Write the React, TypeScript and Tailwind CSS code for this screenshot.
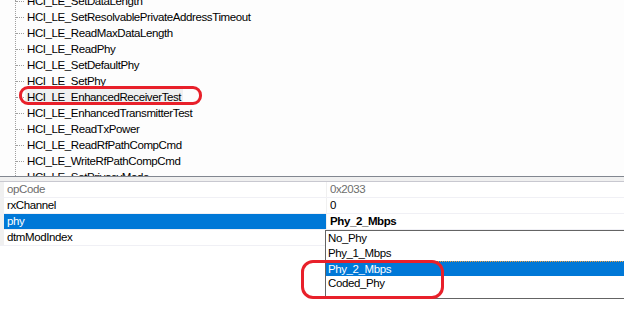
import React from 'react'

const treeItems = [
    'HCI_LE_SetDataLength',
    'HCI_LE_SetResolvablePrivateAddressTimeout',
    'HCI_LE_ReadMaxDataLength',
    'HCI_LE_ReadPhy',
    'HCI_LE_SetDefaultPhy',
    'HCI_LE_SetPhy',
    'HCI_LE_EnhancedReceiverTest',
    'HCI_LE_EnhancedTransmitterTest',
    'HCI_LE_ReadTxPower',
    'HCI_LE_ReadRfPathCompCmd',
    'HCI_LE_WriteRfPathCompCmd',
    'HCI_LE_SetPrivacyMode',
]

const props = [
    { name: 'opCode', value: '0x2033', readOnly: true },
    { name: 'rxChannel', value: '0' },
    { name: 'phy', value: 'Phy_2_Mbps', selected: true },
    { name: 'dtmModIndex', value: '' },
]

const options = ['No_Phy', 'Phy_1_Mbps', 'Phy_2_Mbps', 'Coded_Phy']

export default function App() {
    return (
        <div className="relative w-[624px] h-[310px] overflow-hidden bg-white text-[11.5px] tracking-[-0.4px] text-black font-['Liberation_Sans',Arial,sans-serif]">
            {/* Tree view */}
            <div className="relative h-[176px] overflow-hidden bg-[#fdfdfd]">
                <div className="absolute left-[15px] top-0 bottom-0 border-l border-dotted border-[#a0a0a0]" />
                <ul className="-mt-[7px]">
                    {treeItems.map((item) => (
                        <li key={item} className="flex items-center h-4">
                            <span className="ml-[16px] w-[8px] border-t border-dotted border-[#a0a0a0]" />
                            <span
                                className={
                                    item === 'HCI_LE_EnhancedReceiverTest'
                                        ? 'ml-[1px] px-[2px] leading-4 bg-[#f0f0f0]'
                                        : 'ml-[1px] px-[2px] leading-4'
                                }
                            >
                                {item}
                            </span>
                        </li>
                    ))}
                </ul>
            </div>

            {/* Splitter */}
            <div className="h-[5px] border-t border-[#828790] bg-[#f0f0f0]" />

            {/* Property grid */}
            <div className="border-t border-[#c8c8d0] bg-white">
                {props.map((p) => (
                    <div key={p.name} className="flex h-4 border-b border-[#f0f0f5]">
                        <div className="w-[4px] bg-[#f0f0f0]" />
                        <div
                            className={
                                p.selected
                                    ? 'w-[322px] pl-[3px] leading-[15px] bg-[#0078d7] text-white'
                                    : p.readOnly
                                      ? 'w-[322px] pl-[3px] leading-[15px] text-[#6d6d6d]'
                                      : 'w-[322px] pl-[3px] leading-[15px]'
                            }
                        >
                            {p.name}
                        </div>
                        <div className="w-px bg-[#f0f0f0]" />
                        <div
                            className={
                                p.selected
                                    ? 'flex-1 pl-[3px] leading-[15px] font-bold'
                                    : p.readOnly
                                      ? 'flex-1 pl-[3px] leading-[15px] text-[#6d6d6d]'
                                      : 'flex-1 pl-[3px] leading-[15px]'
                            }
                        >
                            {p.value}
                        </div>
                    </div>
                ))}
            </div>

            {/* Dropdown list */}
            <div className="absolute left-[325px] top-[230px] w-[305px] h-[69px] border border-[#646464] bg-white">
                {options.map((o) => (
                    <div
                        key={o}
                        className={
                            o === 'Phy_2_Mbps'
                                ? 'h-[15px] pl-[2px] leading-[15px] bg-[#0078d7] text-white border-t border-dotted border-[#f0a040]'
                                : 'h-[15px] pl-[2px] leading-[15px]'
                        }
                    >
                        {o}
                    </div>
                ))}
            </div>

            {/* Red annotations */}
            <div className="absolute left-[19px] top-[86px] w-[183px] h-[19px] border-[3px] border-[#e8202a] rounded-[9px]" />
            <div className="absolute left-[301px] top-[260px] w-[143px] h-[39px] border-[3px] border-[#e8202a] rounded-[12px]" />
        </div>
    )
}
